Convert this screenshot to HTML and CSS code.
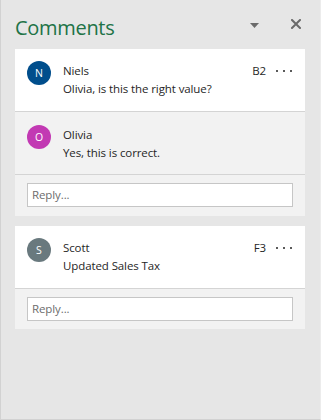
FILE: index.html
```html
<!DOCTYPE html>
<html>
<head>
<meta charset="utf-8">
<link rel="stylesheet" href="styles.css">
</head>
<body>
<div class="pane">
  <div class="header">
    <h1 class="title">Comments</h1>
    <div class="header-icons">
      <svg class="icon-drop" width="9" height="5" viewBox="0 0 9 5"><path d="M0 0H9L4.5 5Z" fill="#6b6b6b"/></svg>
      <svg class="icon-close" width="10" height="10" viewBox="0 0 10 10"><path d="M1 1L9 9M9 1L1 9" stroke="#6b6b6b" stroke-width="2" stroke-linecap="square"/></svg>
    </div>
  </div>

  <div class="card">
    <div class="comment">
      <div class="avatar av-n">N</div>
      <div class="body">
        <div class="line1"><span class="name">Niels</span><span class="meta"><span class="cell">B2</span><span class="dots"><i></i><i></i><i></i></span></span></div>
        <div class="text">Olivia, is this the right value?</div>
      </div>
    </div>
    <div class="comment reply">
      <div class="avatar av-o">O</div>
      <div class="body">
        <div class="line1"><span class="name">Olivia</span></div>
        <div class="text">Yes, this is correct.</div>
      </div>
    </div>
    <div class="reply-box"><div class="input">Reply...</div></div>
  </div>

  <div class="card">
    <div class="comment">
      <div class="avatar av-s">S</div>
      <div class="body">
        <div class="line1"><span class="name">Scott</span><span class="meta"><span class="cell">F3</span><span class="dots"><i></i><i></i><i></i></span></span></div>
        <div class="text">Updated Sales Tax</div>
      </div>
    </div>
    <div class="reply-box"><div class="input">Reply...</div></div>
  </div>
</div>
</body>
</html>
```
FILE: styles.css
```css
html, body {
  margin: 0;
  padding: 0;
}
body {
  width: 321px;
  height: 420px;
  overflow: hidden;
  font-family: "Open Sans", "Noto Sans", sans-serif;
  color: #262626;
}
.pane {
  box-sizing: border-box;
  width: 321px;
  height: 420px;
  background: #e6e6e6;
  border-left: 1px solid #d2d2d2;
  border-right: 1px solid #ececec;
  border-bottom: 1px solid #d2d2d2;
  padding: 0 15px 0 14px;
}
.header {
  height: 49px;
  display: flex;
  align-items: flex-start;
  justify-content: space-between;
}
.title {
  margin: 14px 0 0 0;
  font-weight: 400;
  font-size: 20px;
  line-height: 28px;
  color: #217346;
  letter-spacing: -0.3px;
}
.header-icons {
  display: flex;
  align-items: center;
  margin-top: 19px;
  height: 10px;
}
.icon-drop {
  display: block;
  margin-right: 32px;
  margin-top: 2px;
}
.icon-close {
  display: block;
  margin-right: 4px;
}
.card {
  background: #f2f2f2;
  margin-bottom: 10px;
}
.comment {
  display: flex;
  padding: 11px 12px 15px 12px;
  background: #fff;
  border-bottom: 1px solid #d4d4d4;
  height: 36px;
}
.comment.reply {
  background: #f2f2f2;
  padding-top: 12px;
  padding-bottom: 14px;
}
.avatar {
  width: 24px;
  height: 24px;
  border-radius: 50%;
  color: #fff;
  font-size: 10.5px;
  line-height: 24px;
  text-align: center;
  flex: none;
  margin-top: 1px;
}
.av-n { background: #004e8c; }
.av-o { background: #c239b3; }
.av-s { background: #69797e; }
.body {
  flex: 1;
  margin-left: 12px;
  padding-top: 2px;
  font-size: 11.5px;
  letter-spacing: -0.1px;
  line-height: 18px;
}
.line1 {
  display: flex;
  justify-content: space-between;
  align-items: center;
}
.meta {
  display: flex;
  align-items: center;
}
.cell {
  color: #262626;
}
.dots {
  display: flex;
  margin-left: 10px;
  gap: 5px;
  margin-right: 1px;
}
.dots i {
  display: block;
  width: 2px;
  height: 2px;
  background: #5a5a5a;
}
.reply-box {
  padding: 8px 12px 9px 12px;
}
.input {
  box-sizing: border-box;
  height: 24px;
  background: #fff;
  border: 1px solid #c6c6c6;
  font-size: 11.5px;
  letter-spacing: -0.1px;
  line-height: 22px;
  padding-left: 4px;
  color: #6d6d6d;
}
.card + .card .reply-box {
  padding-bottom: 8px;
}
```
